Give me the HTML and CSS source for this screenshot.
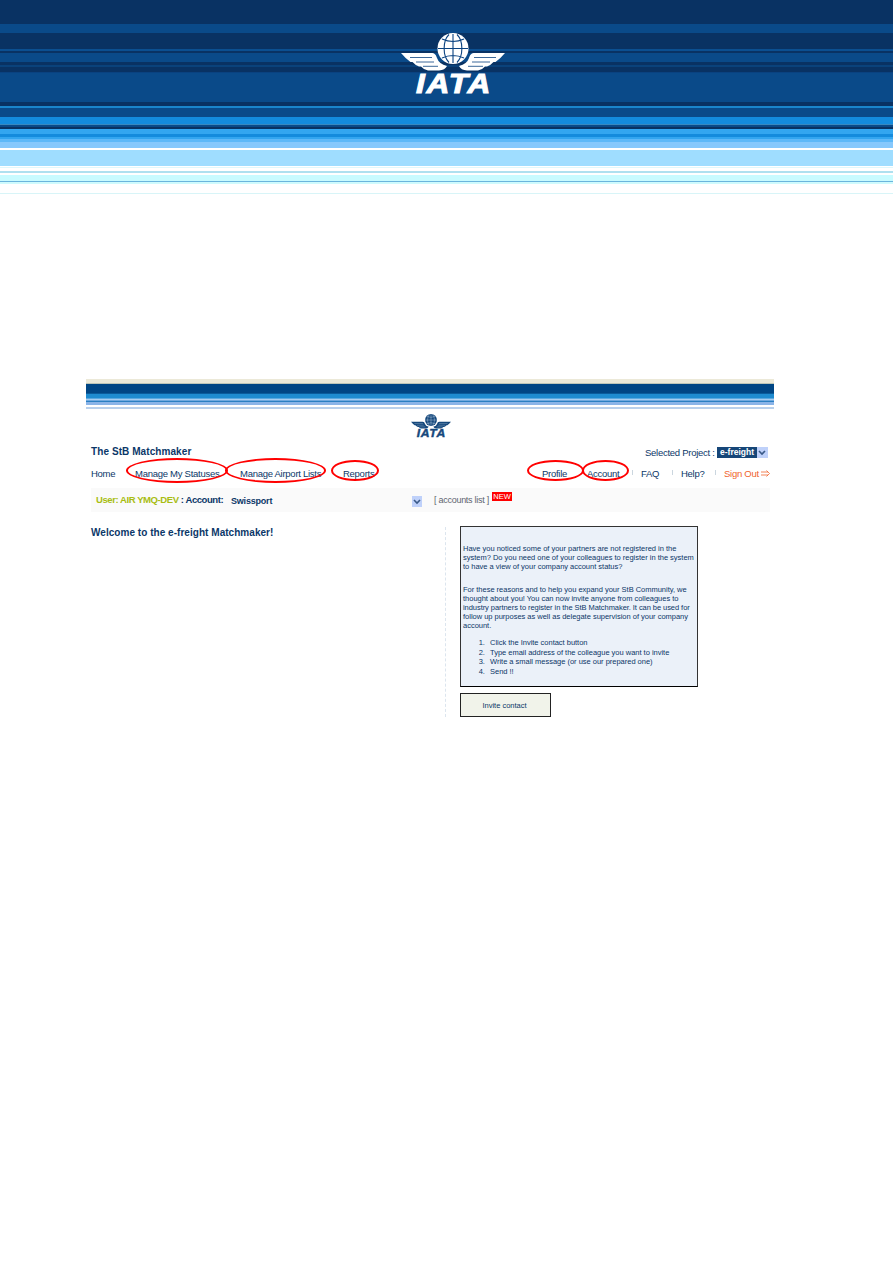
FILE: index.html
```
<!DOCTYPE html>
<html lang="en">
<head>
<meta charset="utf-8">
<title>The StB Matchmaker</title>
<link rel="stylesheet" href="styles.css">
</head>
<body>
<header class="banner">
  <svg class="logo" viewBox="0 0 104 62">
    <g id="iata">
      <circle class="mark" cx="52" cy="15.500" r="15.500"/>
      <path class="lines" d="M52 1V30M37 15.500H67M41 6Q52 11 63 6M41 25Q52 20 63 25M48 1.500C41.500 8 41.500 23 48 29.500M56 1.500C62.500 8 62.500 23 56 29.500"/>
      <g id="wing">
        <path class="mark" d="M0 20H30C34 20 35 22 36 25Q38 31 46 33Q44 37 38 37.500H27Q23 37 20 33.500H18Q14 32 11.500 29H9.500Q5 26 0 20Z"/>
        <path class="lines feather" d="M9 24.500H31M15 29H33M22 33.300H37"/>
      </g>
      <use href="#wing" transform="matrix(-1 0 0 1 104 0)"/>
      <text class="word" x="15" y="60" textLength="76" lengthAdjust="spacingAndGlyphs">IATA</text>
    </g>
  </svg>
</header>
<main class="app">
  <div class="bars"></div>
  <svg class="logo small" viewBox="0 0 104 62"><use href="#iata"/></svg>
  <div class="titlebar">
    <h1>The StB Matchmaker</h1>
    <div class="project"><span>Selected Project :</span><b>e-freight</b><i class="drop"><svg viewBox="0 0 10 10"><path d="M2 3.500L5 6.500L8 3.500"/></svg></i></div>
  </div>
  <nav class="menu">
    <a class="home">Home</a>
    <a class="statuses">Manage My Statuses<i class="ring"></i></a>
    <a class="lists">Manage Airport Lists<i class="ring"></i></a>
    <a class="reports">Reports<i class="ring"></i></a>
    <a class="profile">Profile<i class="ring"></i></a>
    <a class="account">Account<i class="ring"></i></a>
    <i class="sep"></i>
    <a class="faq">FAQ</a>
    <i class="sep"></i>
    <a class="help">Help?</a>
    <i class="sep"></i>
    <a class="out">Sign Out <svg viewBox="0 0 9 7"><path d="M0 2H7M0 5H7M5.500 .5L8.500 3.500L5.500 6.500"/></svg></a>
  </nav>
  <div class="userbar">
    <div class="user"><em>User: AIR YMQ-DEV</em> : Account:</div>
    <b class="company">Swissport</b>
    <i class="drop"><svg viewBox="0 0 10 10"><path d="M2 3.500L5 6.500L8 3.500"/></svg></i>
    <span class="acclist">[ accounts list ]</span>
    <span class="new">NEW</span>
  </div>
  <div class="content">
    <h2>Welcome to the e-freight Matchmaker!</h2>
    <aside>
      <div class="notice">
        <p>Have you noticed some of your partners are not registered in the<br>system? Do you need one of your colleagues to register in the system<br>to have a view of your company account status?</p>
        <p>For these reasons and to help you expand your StB Community, we<br>thought about you! You can now invite anyone from colleagues to<br><span class="tight">industry partners to register in the StB Matchmaker. It can be used for</span><br>follow up purposes as well as delegate supervision of your company<br>account.</p>
        <ol><li>Click the Invite contact button</li><li>Type email address of the colleague you want to invite</li><li>Write a small message (or use our prepared one)</li><li>Send !!</li></ol>
      </div>
      <button>Invite contact</button>
    </aside>
  </div>
</main>
</body>
</html>
```
FILE: styles.css
```
* { box-sizing: border-box; }
body { margin: 0; height: 1263px; background: #fff; font-family: "Liberation Sans", Arial, sans-serif; color: #0b3768; overflow: hidden; }
.banner {
  height: 194px; padding: 33px 0 0 401px;
  background: linear-gradient(#093263 24px, #0a4a89 24px 33px, #093263 33px 49px, #0b4f91 49px 51px, #093263 51px 53px, #0a4a89 53px 62px, #093263 62px 65px, #0a427b 65px 67px, #093263 67px 72px, #0a4280 72px 73px, #0a4a89 73px 102px, #093263 102px 106px, #1a85cc 106px 108px, #0a4a89 108px 117px, #148bdd 117px 124px, #3888c0 124px 125px, #0a4a89 125px 127px, #093263 127px 129px, #33a6f0 129px 134px, #148bdd 134px 137px, #33a6f0 137px 139px, #5db8f8 139px 142px, #86c8fc 142px 148px, #fff 148px 150px, #9fddff 150px 166px, #fff 166px 167px, #dff8fc 167px 168px, #fff 168px 171px, #aee0ef 171px 173px, #fff 173px 175px, #c8fbff 175px 181px, #6bb5dd 181px 182px, #cffbfd 182px 184px, #fff 184px 193px, #d8f5f8 193px);
}
.logo { display: block; width: 104px; height: 62px; color: #fff; --line: #0a4280; overflow: visible; }
.small { width: 40px; height: 26px; margin: 4px 0 0 325px; color: #15487c; --line: #bdd0e2; }
.mark { fill: currentColor; }
.lines { fill: none; stroke: var(--line); stroke-width: 1.1; }
.feather { stroke-width: .8; }
.word { font: italic bold 27px "Liberation Sans", Arial, sans-serif; letter-spacing: 1.500px; fill: currentColor; stroke: currentColor; stroke-width: 1; }
.app { width: 688px; margin: 185px 0 0 86px; }
.bars { height: 30px; background: linear-gradient(#ece9d8 4px, #bdc5b8 4px 5px, #004584 5px 14px, #0a5b9b 14px 15px, #1e8bd0 15px 19px, #5aa8e0 19px 20px, #a8cdf0 20px 21px, #70a9df 21px 22px, #2a7fc2 22px 23px, #8ab4e8 23px 26px, #fff 26px 28px, #b8d0ec 28px); }
.titlebar { display: flex; justify-content: space-between; height: 22px; padding: 6px 6px 0 5px; }
h1 { margin: 0; font-size: 10px; line-height: 13px; letter-spacing: .08px; white-space: nowrap; }
.project { display: flex; height: 12px; margin-top: 2px; font-size: 9.500px; line-height: 12px; }
.project span { width: 72px; letter-spacing: -.27px; white-space: nowrap; }
.project b { width: 40px; height: 11px; background: #164678; color: #fff; font-size: 8.500px; line-height: 11px; text-align: center; }
.drop { display: block; width: 11px; height: 11px; background: #bfd1fa; }
.drop svg { display: block; width: 10px; height: 11px; fill: none; stroke: #3a5a88; stroke-width: 1.6; }
.menu { display: flex; height: 27px; padding: 4px 0 0 5px; font-size: 9.500px; line-height: 17px; letter-spacing: -.27px; white-space: nowrap; }
.menu a { position: relative; flex: none; }
.home { width: 44px; }
.statuses { width: 105px; }
.lists { width: 103px; }
.reports { width: 199px; }
.profile { width: 45px; }
.account { width: 45px; }
.faq { width: 31px; }
.help { width: 34px; }
.sep { width: 1px; height: 5px; margin: 5px 8px 0 0; background: #cbd6df; }
.out { color: #f0642d; }
.out svg { width: 9px; height: 7px; fill: none; stroke: currentColor; stroke-width: .8; }
.ring { position: absolute; border: 2px solid #f00; border-radius: 50%; }
.statuses .ring { left: -9px; top: -7px; width: 102px; height: 25px; }
.lists .ring { left: -15px; top: -7px; width: 101px; height: 25px; }
.reports .ring { left: -12px; top: -5px; width: 48px; height: 21px; }
.profile .ring { left: -15px; top: -5px; width: 57px; height: 21px; }
.account .ring { left: -5px; top: -5px; width: 47px; height: 21px; }
.userbar { display: flex; width: 679px; height: 24px; margin-left: 5px; padding-left: 5px; background: #fafafa; font-size: 9px; line-height: 24px; white-space: nowrap; }
.user { width: 135px; font-weight: bold; font-size: 9.500px; letter-spacing: -.42px; }
.user em { font-style: normal; color: #a8bd12; }
.company { width: 181px; letter-spacing: -.2px; line-height: 27px; }
.userbar .drop { width: 10px; margin-top: 8px; }
.acclist { width: 58px; margin-left: 12px; color: #5f6570; letter-spacing: -.27px; }
.new { width: 20px; height: 9px; margin-top: 4px; background: #f00; color: #fff; font-size: 7.500px; line-height: 9px; text-align: center; }
.content { display: flex; padding-left: 5px; }
h2 { width: 355px; height: 190px; margin: 15px 0 0; border-right: 1px dashed #dce5ee; font-size: 10px; line-height: 12px; letter-spacing: .04px; }
aside { padding: 14px 0 0 14px; }
.notice { width: 238px; height: 161px; padding: 17px 0 0 2px; border: 1px solid #333; border-bottom-color: #000; background: #ebf1f9; font-size: 7.500px; line-height: 9.200px; letter-spacing: -.015px; white-space: nowrap; }
.tight { letter-spacing: -.06px; }
.notice p { margin: 0 0 13px; }
.notice ol { margin: -5.500px 0 0; padding-left: 26px; }
.notice li { padding-left: 1px; line-height: 9.500px; }
.notice li::marker { content: counter(list-item) ".\00a0\00a0"; }
button { display: block; width: 91px; height: 24px; margin-top: 6px; padding: 0 2px 0 0; border: 1px solid #222; border-radius: 0; background: #f1f3ea; color: #0b3768; font: 7.500px "Liberation Sans", Arial, sans-serif; }
```
